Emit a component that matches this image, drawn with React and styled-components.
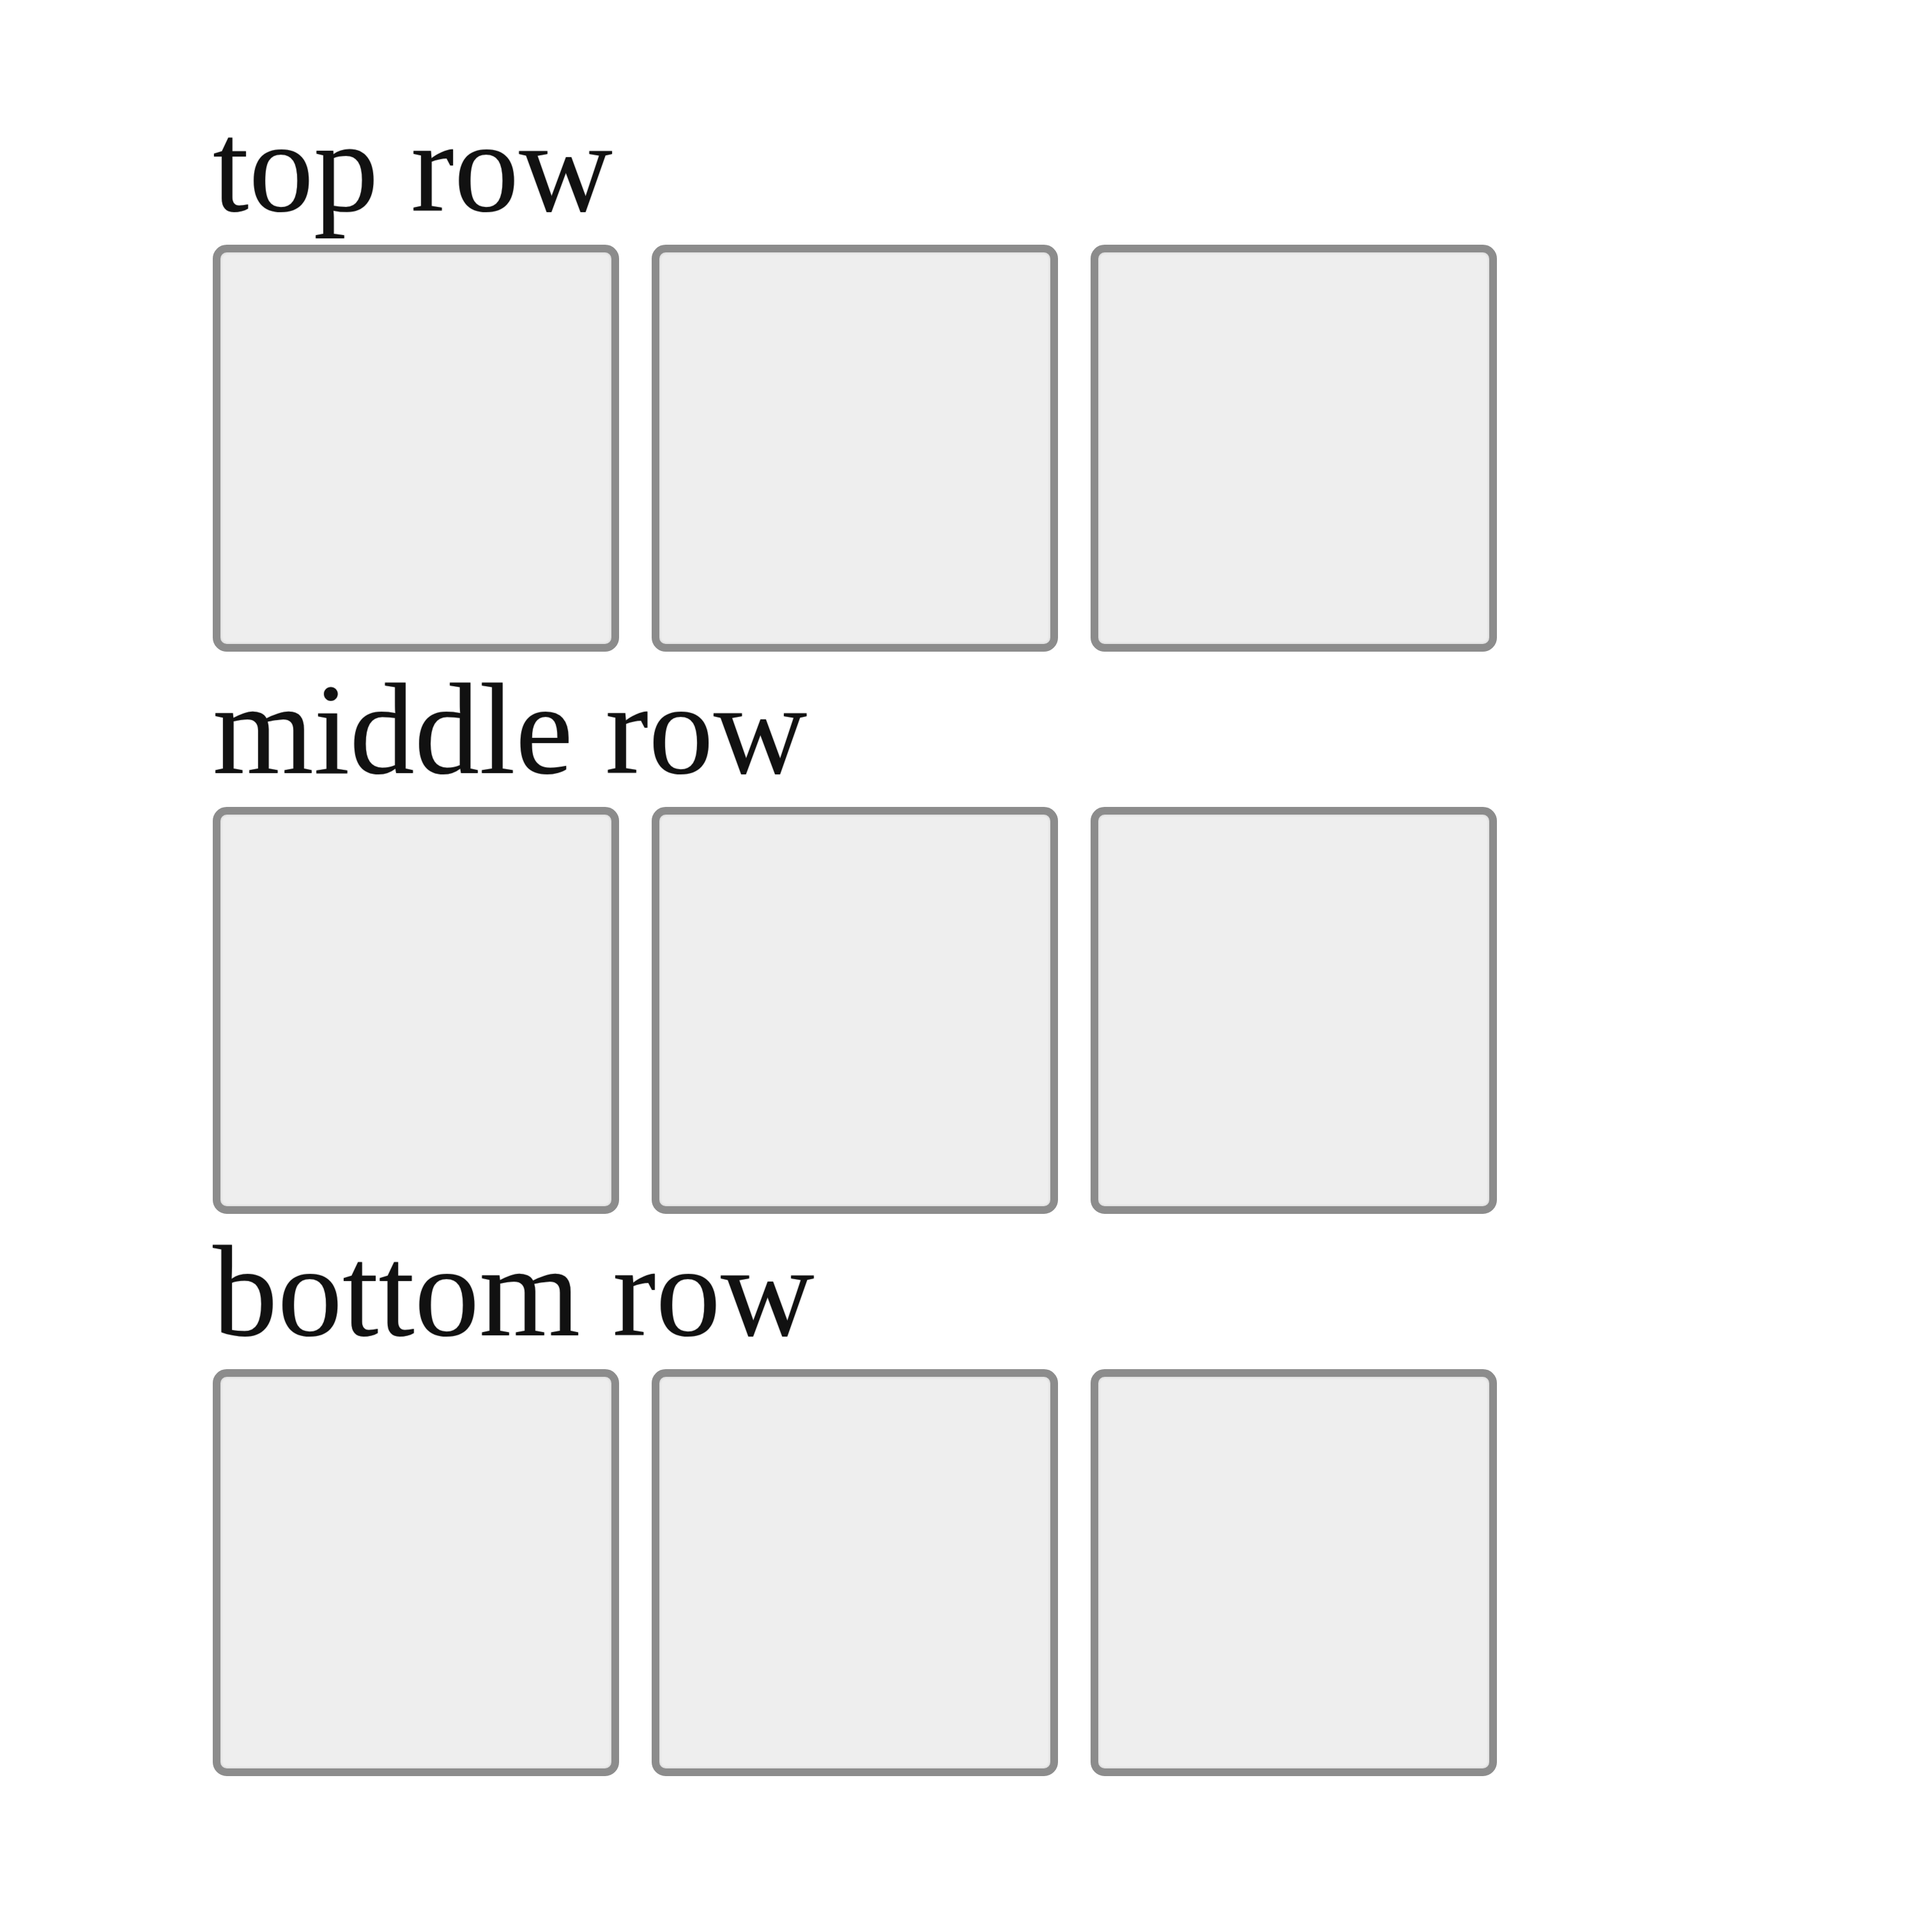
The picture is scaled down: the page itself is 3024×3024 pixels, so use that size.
import React from 'react'
import styled, { createGlobalStyle } from 'styled-components'

const GlobalStyle = createGlobalStyle`
  html, body {
    margin: 0;
    padding: 0;
    background: #ffffff;
  }
`

const Page = styled.div`
  display: flex;
  flex-direction: column;
  padding: 140px 0 0 333px;
  font-family: "Liberation Serif", "Times New Roman", serif;
  color: #111111;
`

const Section = styled.section`
  display: flex;
  flex-direction: column;
`

const Label = styled.div`
  font-size: 203px;
  line-height: 243px;
  height: 243px;
  white-space: nowrap;
  text-shadow: 0 0 2px rgba(0, 0, 0, 0.5);
`

const Row = styled.div`
  display: flex;
  gap: 51px;
`

const Cell = styled.div`
  box-sizing: border-box;
  width: 636px;
  height: 637px;
  background: #eeeeee;
  border: 12px solid #8c8c8c;
  border-radius: 22px;
  box-shadow: inset 0 0 4px rgba(0, 0, 0, 0.15);
`

const rows = ['top row', 'middle row', 'bottom row']

export default function App() {
  return (
    <>
      <GlobalStyle />
      <Page>
        {rows.map(label => (
          <Section key={label}>
            <Label>{label}</Label>
            <Row>
              <Cell />
              <Cell />
              <Cell />
            </Row>
          </Section>
        ))}
      </Page>
    </>
  )
}
